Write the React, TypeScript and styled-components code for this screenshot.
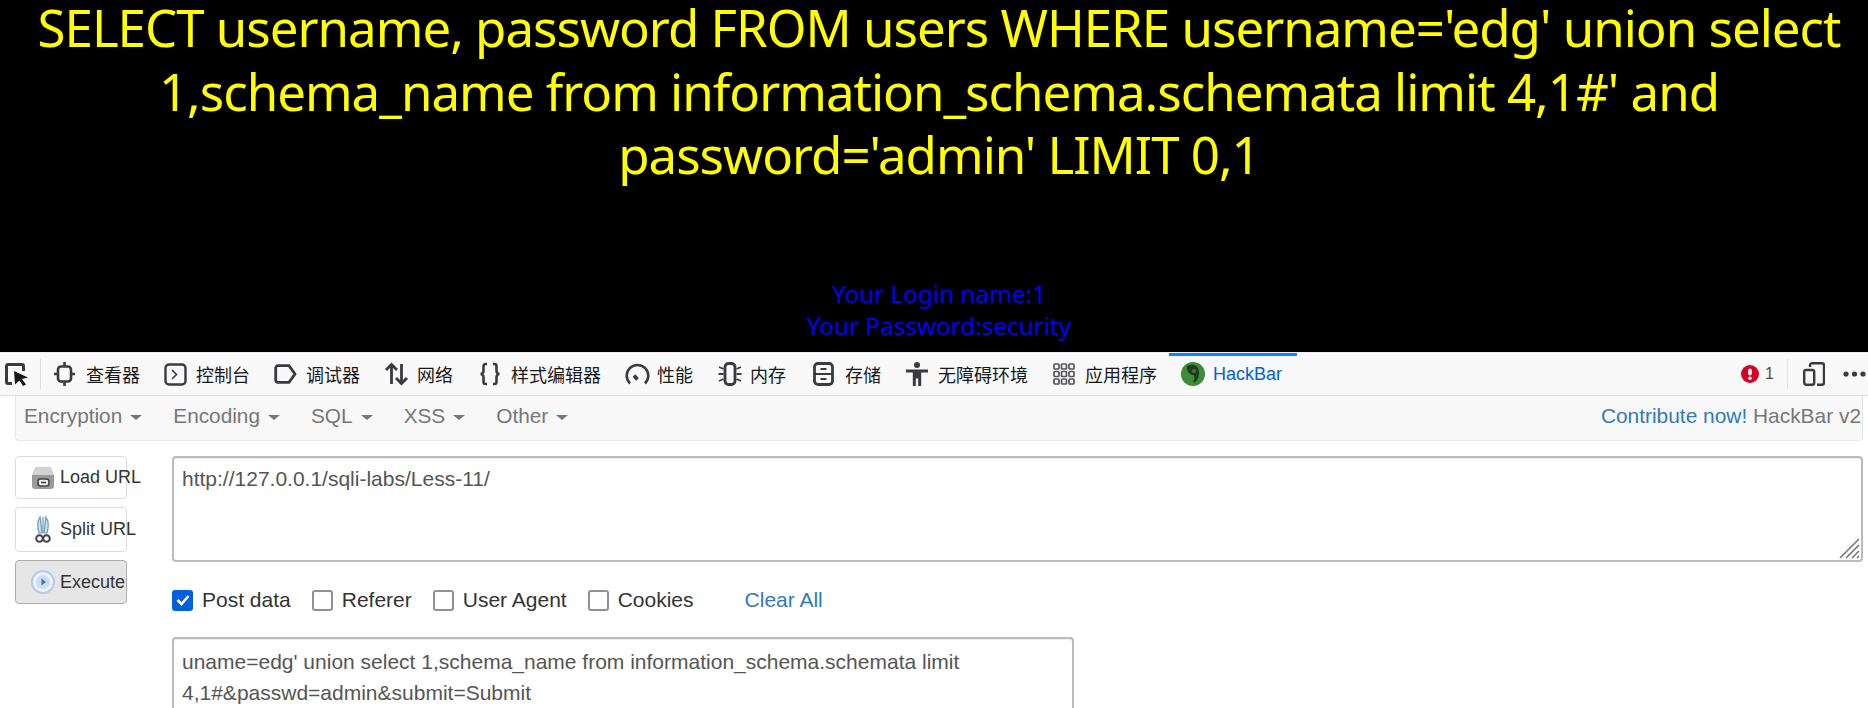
import type { ReactNode } from 'react';
import styled, { createGlobalStyle } from 'styled-components';

const GlobalStyle = createGlobalStyle`
    html, body {
        margin: 0;
        padding: 0;
        background: #fff;
        overflow: hidden;
    }
    * { box-sizing: border-box; }
`;
const Page = styled.div`
    width: 1868px;
    height: 708px;
    overflow: hidden;
    display: flex;
    flex-direction: column;
    font-family: "Liberation Sans", "Noto Sans CJK SC", sans-serif;
`;
const Stage = styled.section`
    height: 352px;
    flex: none;
    background: #000;
    display: flex;
    flex-direction: column;
    align-items: center;
    padding: 0 20px 0 30px;
    font-family: "Noto Sans", "Open Sans", sans-serif;
`;
const Query = styled.h1`
    margin: -4px 0 0;
    text-align: center;
    font-size: 51px;
    letter-spacing: -1px;
    line-height: 63.5px;
    font-weight: 400;
    color: #ff0;
`;
const LoginInfo = styled.div`
    margin-top: auto;
    padding-bottom: 10px;
    text-align: center;
    font-size: 24.3px;
    line-height: 32px;
    color: #00f;
`;
const Toolbar = styled.nav`
    height: 44px;
    flex: none;
    background: #f9f9fa;
    border-top: 1px solid #f0f0f4;
    border-bottom: 1px solid #e0e0e2;
    display: flex;
    align-items: center;
    font-family: "Noto Sans CJK SC", sans-serif;
    font-size: 18px;
    color: #18181a;
`;
const PickerCell = styled.div`
    width: 41px;
    height: 30px;
    flex: none;
    display: flex;
    align-items: center;
    padding-left: 4px;
    border-right: 1px solid #e0e0e2;
`;
const Tab = styled.div<{ $width: number }>`
    width: ${(p) => p.$width}px;
    height: 43px;
    flex: none;
    display: flex;
    align-items: center;
    padding-left: 13px;
    white-space: nowrap;
`;
const ActiveTab = styled(Tab)`
    position: relative;
    padding-left: 12px;
    color: #0060df;
    font-family: "Liberation Sans", sans-serif;
    &::before {
        content: "";
        position: absolute;
        left: 0;
        right: 0;
        top: 0;
        height: 3px;
        background: #0a84ff;
    }
`;
const TabIcon = styled.span`
    width: 32px;
    flex: none;
    display: flex;
    align-items: center;
`;
const ToolbarRight = styled.div`
    margin-left: auto;
    display: flex;
    align-items: center;
    height: 30px;
    padding-right: 2px;
`;
const ErrorCount = styled.div`
    display: flex;
    align-items: center;
    gap: 6px;
    width: 47px;
    height: 30px;
    font-family: "Liberation Sans", sans-serif;
    font-size: 16px;
    color: #4a4a4f;
    border-right: 1px solid #e0e0e2;
`;
const ToolbarButton = styled.div<{ $left: number }>`
    display: flex;
    align-items: center;
    padding-left: ${(p) => p.$left}px;
`;
const HackBar = styled.main`
    flex: 1;
    min-height: 0;
    padding: 0 5px 0 15px;
    color: #333;
`;
const MenuBar = styled.div`
    height: 45px;
    background: #f8f8f8;
    border: 1px solid #e7e7e7;
    border-top: none;
    border-radius: 0 0 4px 4px;
    display: flex;
    align-items: center;
    padding: 0 1px 5px 8px;
    margin-bottom: 15px;
`;
const Menu = styled.span`
    color: #777;
    font-size: 20.8px;
    margin-right: 31px;
    display: flex;
    align-items: center;
    gap: 8px;
    &::after {
        content: "";
        margin-top: 3px;
        border-top: 5px solid #777;
        border-left: 6px solid transparent;
        border-right: 6px solid transparent;
    }
`;
const MenuRight = styled.div`
    margin-left: auto;
    font-size: 20.9px;
    color: #777;
`;
const Link = styled.span`
    color: #337ab7;
`;
const Body = styled.div`
    display: flex;
    gap: 45px;
`;
const ButtonColumn = styled.div`
    width: 112px;
    flex: none;
    display: flex;
    flex-direction: column;
    gap: 8px;
`;
const ActionButton = styled.div<{ $height: number; $pressed?: boolean }>`
    height: ${(p) => p.$height}px;
    width: 112px;
    border: 1px solid ${(p) => (p.$pressed ? '#adadad' : '#ddd')};
    border-radius: 4px;
    background: ${(p) => (p.$pressed ? '#e6e6e6' : '#fff')};
    display: flex;
    align-items: center;
    padding-left: 15px;
    font-size: 18px;
    color: #333;
    white-space: nowrap;
`;
const ButtonIcon = styled.span`
    width: 29px;
    flex: none;
    display: flex;
    justify-content: flex-start;
`;
const FormColumn = styled.div`
    flex: 1;
    min-width: 0;
    display: flex;
    flex-direction: column;
`;
const Field = styled.div<{ $width?: number; $height: number; $top: number }>`
    position: relative;
    width: ${(p) => (p.$width ? `${p.$width}px` : '100%')};
    height: ${(p) => p.$height}px;
    flex: none;
    border: 2px solid #bbb;
    border-radius: 4px;
    padding: ${(p) => p.$top}px 8px 0;
    font-size: 21px;
    line-height: 31px;
    color: #555;
    background: #fff;
    box-shadow: inset 0 1px 1px rgba(0, 0, 0, 0.075);
`;
const Grip = styled.svg`
    position: absolute;
    right: 1px;
    bottom: 1px;
`;
const OptionRow = styled.div`
    height: 40px;
    margin: 18px 0 17px;
    display: flex;
    align-items: center;
`;
const Option = styled.label`
    display: flex;
    align-items: center;
    gap: 9px;
    margin-right: 21px;
    font-size: 21px;
`;
const Box = styled.span<{ $checked?: boolean }>`
    width: 21px;
    height: 21px;
    border-radius: 3px;
    display: flex;
    align-items: center;
    justify-content: center;
    background: ${(p) => (p.$checked ? '#0060df' : '#fff')};
    border: ${(p) => (p.$checked ? 'none' : '2.5px solid #8f8f9d')};
`;
const ClearAll = styled(Link)`
    margin-left: 30px;
    font-size: 21px;
`;

const tabs: { label: string; width: number; icon: ReactNode }[] = [
    {
        label: '查看器',
        width: 110,
        icon: (
            <svg width="21" height="24" viewBox="0 0 21 24" fill="none" stroke="#3b3b3f" strokeWidth="2.6">
                <rect x="4" y="4.500" width="13" height="15" rx="3" />
                <path d="M10.500 0v4.500M10.500 19.500V24M0 12h4M17 12h4" />
            </svg>
        ),
    },
    {
        label: '控制台',
        width: 110,
        icon: (
            <svg width="23" height="23" viewBox="0 0 23 23" fill="none" stroke="#3b3b3f" strokeWidth="2.4">
                <rect x="1.500" y="1.500" width="20" height="20" rx="3.500" />
                <path d="M8 7l4.500 4.500L8 16" strokeWidth="1.600" />
            </svg>
        ),
    },
    {
        label: '调试器',
        width: 111,
        icon: (
            <svg width="23" height="20" viewBox="0 0 23 20" fill="none" stroke="#3b3b3f" strokeWidth="2.800">
                <path d="M4 1.700h11l6 8.300-6 8.300H4a2.300 2.300 0 0 1-2.300-2.300V4A2.300 2.300 0 0 1 4 1.700z" />
            </svg>
        ),
    },
    {
        label: '网络',
        width: 94,
        icon: (
            <svg width="23" height="24" viewBox="0 0 23 24" fill="none" stroke="#3b3b3f" strokeWidth="2.800">
                <path d="M6.500 22V2.500M1 8l5.500-5.500L12 8M16.500 2v19.500M11 16l5.500 5.500L22 16" />
            </svg>
        ),
    },
    {
        label: '样式编辑器',
        width: 146,
        icon: (
            <svg width="22" height="24" viewBox="0 0 22 24" fill="none" stroke="#3b3b3f" strokeWidth="2.600">
                <path d="M8 2H6.500a2 2 0 0 0-2 2v5a3 3 0 0 1-3 3 3 3 0 0 1 3 3v5a2 2 0 0 0 2 2H8" />
                <path d="M14 2h1.500a2 2 0 0 1 2 2v5a3 3 0 0 0 3 3 3 3 0 0 0-3 3v5a2 2 0 0 1-2 2H14" />
            </svg>
        ),
    },
    {
        label: '性能',
        width: 93,
        icon: (
            <svg width="25" height="24" viewBox="0 0 25 24" fill="none" stroke="#3b3b3f" strokeWidth="2.600">
                <path d="M5 21.500a10.800 10.800 0 1 1 15 0" />
                <path d="M9 13.500l3.500 4" strokeWidth="3.600" />
            </svg>
        ),
    },
    {
        label: '内存',
        width: 95,
        icon: (
            <svg width="24" height="24" viewBox="0 0 24 24" fill="none" stroke="#3b3b3f">
                <rect x="7" y="1.500" width="10" height="21" rx="3.500" strokeWidth="2.800" />
                <path d="M1 5l4.500 2M0.500 12h5M1 19l4.500-2M23 5l-4.500 2M23.500 12h-5M23 19l-4.500-2" strokeWidth="1.800" />
            </svg>
        ),
    },
    {
        label: '存储',
        width: 93,
        icon: (
            <svg width="21" height="24" viewBox="0 0 21 24" fill="none" stroke="#3b3b3f" strokeWidth="2.800">
                <rect x="1.500" y="1.500" width="18" height="21" rx="3.500" />
                <path d="M1.500 12h18" strokeWidth="2" />
                <path d="M7.500 7h6M7.500 17h6" strokeWidth="2" />
            </svg>
        ),
    },
    {
        label: '无障碍环境',
        width: 147,
        icon: (
            <svg width="22" height="24" viewBox="0 0 22 24" fill="#3b3b3f">
                <circle cx="11" cy="3" r="3" />
                <path d="M0 7.500h22v3h-6.800V24h-3v-7.500h-2.400V24h-3V10.500H0z" />
            </svg>
        ),
    },
    {
        label: '应用程序',
        width: 129,
        icon: (
            <svg width="22" height="22" viewBox="0 0 22 22" fill="none" stroke="#55555a" strokeWidth="1.700">
                {[1, 8.5, 16].map((y) =>
                    [1, 8.5, 16].map((x) => <rect key={`${x}-${y}`} x={x} y={y} width="5" height="5" rx="1" />)
                )}
            </svg>
        ),
    },
];

const Picker = () => (
    <svg width="25" height="24" viewBox="0 0 25 24">
        <path d="M4 1h14a3 3 0 0 1 3 3v5h-3V4H4v16h4v3H4a3 3 0 0 1-3-3V4a3 3 0 0 1 3-3z" fill="#3b3b3f" />
        <path d="M10 9l14 6.500-6 1.500 4 5.500-3 1.500-3.500-5.500-4.500 4z" fill="#18181a" />
    </svg>
);

export default function App() {
    return (
        <Page>
            <GlobalStyle />
            <Stage>
                <Query>
                    SELECT username, password FROM users WHERE username='edg' union select 1,schema_name from
                    information_schema.schemata limit 4,1#' and password='admin' LIMIT 0,1
                </Query>
                <LoginInfo>
                    Your Login name:1
                    <br />
                    Your Password:security
                </LoginInfo>
            </Stage>
            <Toolbar>
                <PickerCell>
                    <Picker />
                </PickerCell>
                {tabs.map((t) => (
                    <Tab key={t.label} $width={t.width}>
                        <TabIcon>{t.icon}</TabIcon>
                        {t.label}
                    </Tab>
                ))}
                <ActiveTab $width={128}>
                    <TabIcon>
                        <svg width="24" height="24" viewBox="0 0 24 24">
                            <circle cx="12" cy="12" r="12" fill="#3d8a37" />
                            <path d="M6 4c5-3 12-1 12 6s-3 11-6 10c2-3 2-6 0-7-3 0-7-4-6-9z" fill="#1f3d1c" />
                            <circle cx="13" cy="9" r="2" fill="#4f6b4a" />
                        </svg>
                    </TabIcon>
                    HackBar
                </ActiveTab>
                <ToolbarRight>
                    <ErrorCount>
                        <svg width="18" height="18" viewBox="0 0 18 18">
                            <circle cx="9" cy="9" r="9" fill="#d70022" />
                            <rect x="7.200" y="3.500" width="3.600" height="7" rx="1.800" fill="#fff" />
                            <circle cx="9" cy="13.300" r="1.800" fill="#fff" />
                        </svg>
                        1
                    </ErrorCount>
                    <ToolbarButton $left={15}>
                        <svg width="22" height="24" viewBox="0 0 22 24" fill="none" stroke="#3b3b3f" strokeWidth="2.400">
                            <path d="M7 5V3.200a2 2 0 0 1 2-2h10a2 2 0 0 1 2 2v17.600a2 2 0 0 1-2 2h-5" />
                            <rect x="1.200" y="8" width="10" height="14.800" rx="2" />
                        </svg>
                    </ToolbarButton>
                    <ToolbarButton $left={18}>
                        <svg width="23" height="6" viewBox="0 0 23 6" fill="#3b3b3f">
                            <circle cx="3" cy="3" r="2.600" />
                            <circle cx="11.500" cy="3" r="2.600" />
                            <circle cx="20" cy="3" r="2.600" />
                        </svg>
                    </ToolbarButton>
                </ToolbarRight>
            </Toolbar>
            <HackBar>
                <MenuBar>
                    <Menu>Encryption</Menu>
                    <Menu>Encoding</Menu>
                    <Menu>SQL</Menu>
                    <Menu>XSS</Menu>
                    <Menu>Other</Menu>
                    <MenuRight>
                        <Link>Contribute now!</Link> HackBar v2
                    </MenuRight>
                </MenuBar>
                <Body>
                    <ButtonColumn>
                        <ActionButton $height={43}>
                            <ButtonIcon>
                                <svg width="24" height="22" viewBox="0 0 24 22">
                                    <path d="M4 0h16l3 8H1z" fill="#d2d2d2" />
                                    <path d="M1 8h22v11a3 3 0 0 1-3 3H4a3 3 0 0 1-3-3z" fill="#9a9a9a" />
                                    <rect x="7" y="12" width="11" height="7" rx="2.500" fill="#eee" stroke="#444" strokeWidth="1.600" />
                                    <path d="M10 15.500h5" stroke="#444" strokeWidth="1.600" />
                                </svg>
                            </ButtonIcon>
                            Load URL
                        </ActionButton>
                        <ActionButton $height={45}>
                            <ButtonIcon>
                                <svg width="24" height="27" viewBox="0 0 24 27" fill="none">
                                    <path d="M8 17C6 10 7 4 9 1c1 4 1 10 2 16zM16 17c2-7 1-13-1-16-1 4-1 10-2 16z" fill="#cfe3ee" stroke="#6b9ab5" strokeWidth="1.200" />
                                    <path d="M12 17V1" stroke="#6b9ab5" strokeWidth="1.200" />
                                    <circle cx="8.500" cy="22.500" r="3.300" stroke="#444" strokeWidth="2" />
                                    <circle cx="15.500" cy="22.500" r="3.300" stroke="#444" strokeWidth="2" />
                                </svg>
                            </ButtonIcon>
                            Split URL
                        </ActionButton>
                        <ActionButton $height={44} $pressed>
                            <ButtonIcon>
                                <svg width="24" height="24" viewBox="0 0 24 24">
                                    <circle cx="12" cy="12" r="11" fill="#eef2f8" stroke="#b6cbe6" strokeWidth="2" />
                                    <circle cx="12" cy="12" r="7" fill="#cddcf0" />
                                    <path d="M10.500 8.500l4.500 3.500-4.500 3.500z" fill="#3f74b5" />
                                </svg>
                            </ButtonIcon>
                            Execute
                        </ActionButton>
                    </ButtonColumn>
                    <FormColumn>
                        <Field $height={106} $top={5}>
                            http://127.0.0.1/sqli-labs/Less-11/
                            <Grip width="22" height="22" viewBox="0 0 22 22" stroke="#777" strokeWidth="1.600">
                                <path d="M2 21L21 2M8 21L21 8M14 21l7-7M19 21l2-2" />
                            </Grip>
                        </Field>
                        <OptionRow>
                            <Option>
                                <Box $checked>
                                    <svg width="14" height="12" viewBox="0 0 14 12" fill="none" stroke="#fff" strokeWidth="2.600">
                                        <path d="M1.500 6l4 4 7-8" />
                                    </svg>
                                </Box>
                                Post data
                            </Option>
                            <Option>
                                <Box />
                                Referer
                            </Option>
                            <Option>
                                <Box />
                                User Agent
                            </Option>
                            <Option>
                                <Box />
                                Cookies
                            </Option>
                            <ClearAll>Clear All</ClearAll>
                        </OptionRow>
                        <Field $width={902} $height={120} $top={7}>
                            uname=edg' union select 1,schema_name from information_schema.schemata limit
                            <br />
                            4,1#&passwd=admin&submit=Submit
                        </Field>
                    </FormColumn>
                </Body>
            </HackBar>
        </Page>
    );
}
